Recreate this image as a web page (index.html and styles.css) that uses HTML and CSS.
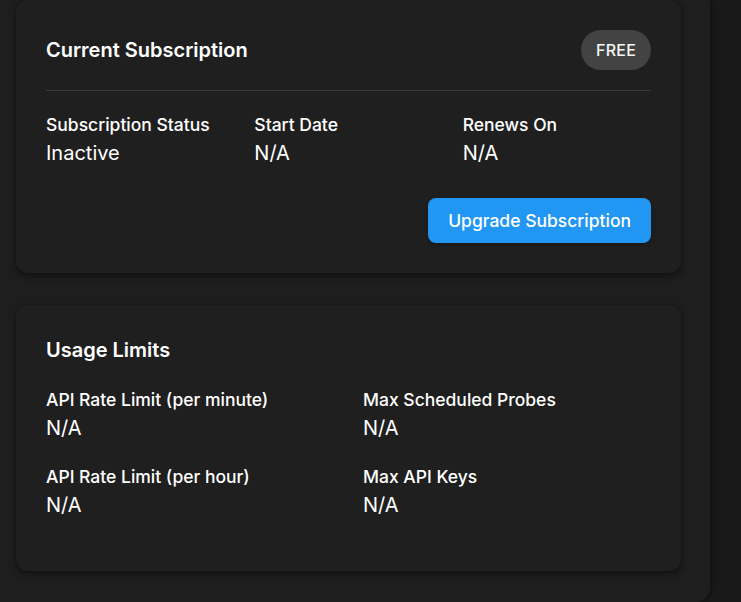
FILE: index.html
```html
<!DOCTYPE html>
<html lang="en">
<head>
<meta charset="utf-8">
<title>Subscription</title>
<link rel="stylesheet" href="styles.css">
</head>
<body>
<div class="panel">
  <section class="card">
    <div class="card-header">
      <h2 class="card-title">Current Subscription</h2>
      <span class="chip">FREE</span>
    </div>
    <hr class="divider">
    <div class="sub-grid">
      <div class="field">
        <div class="label">Subscription Status</div>
        <div class="value">Inactive</div>
      </div>
      <div class="field">
        <div class="label">Start Date</div>
        <div class="value">N/A</div>
      </div>
      <div class="field">
        <div class="label">Renews On</div>
        <div class="value">N/A</div>
      </div>
    </div>
    <div class="actions">
      <button class="btn-primary">Upgrade Subscription</button>
    </div>
  </section>

  <section class="card card-usage">
    <h2 class="card-title">Usage Limits</h2>
    <div class="usage-grid">
      <div class="field">
        <div class="label">API Rate Limit (per minute)</div>
        <div class="value">N/A</div>
      </div>
      <div class="field">
        <div class="label">Max Scheduled Probes</div>
        <div class="value">N/A</div>
      </div>
      <div class="field">
        <div class="label">API Rate Limit (per hour)</div>
        <div class="value">N/A</div>
      </div>
      <div class="field">
        <div class="label">Max API Keys</div>
        <div class="value">N/A</div>
      </div>
    </div>
  </section>
</div>
</body>
</html>
```

FILE: styles.css
```css
* { box-sizing: border-box; }

html, body {
  margin: 0;
  padding: 0;
  background: #191919;
  height: 100%;
  overflow: hidden;
}

body {
  font-family: Inter, "Noto Sans", sans-serif;
  color: #ffffff;
}

.panel {
  width: 710px;
  height: 602px;
  background: #1e1e1e;
  border-bottom-right-radius: 14px;
  box-shadow: 2px 0 4px rgba(0, 0, 0, 0.35);
  padding: 0 29px 0 16px;
  display: flex;
  flex-direction: column;
  gap: 32px;
}

.card {
  background: #1f1f1f;
  border-radius: 12px;
  padding: 30px;
  box-shadow: 0 2px 4px -1px rgba(0,0,0,0.25), 0 4px 5px 0 rgba(0,0,0,0.18), 0 1px 10px 0 rgba(0,0,0,0.15);
}

.card-header {
  display: flex;
  align-items: center;
  justify-content: space-between;
  height: 40px;
}

.card-title {
  margin: 0;
  font-size: 20px;
  font-weight: 600;
  line-height: 30px;
}

.chip {
  background: #434343;
  color: #f7f7f7;
  height: 40px;
  border-radius: 20px;
  padding: 0 15px;
  display: inline-flex;
  align-items: center;
  font-size: 16px;
  font-weight: 500;
  letter-spacing: 0.2px;
}

.divider {
  border: 0;
  border-top: 1px solid #3a3a3a;
  margin: 20px 0 22px 0;
}

.sub-grid {
  display: grid;
  grid-template-columns: repeat(3, 1fr);
  column-gap: 20px;
}

.label {
  font-size: 17.5px;
  font-weight: 500;
  line-height: 24px;
}

.value {
  margin-top: 2px;
  font-size: 20px;
  font-weight: 400;
  line-height: 28px;
}

.actions {
  display: flex;
  justify-content: flex-end;
  margin-top: 31px;
}

.btn-primary {
  font-family: inherit;
  background: #2196f3;
  color: #ffffff;
  border: 0;
  border-radius: 8px;
  height: 45px;
  padding: 0 20px;
  font-size: 17.5px;
  font-weight: 500;
  box-shadow: 0 2px 4px rgba(0,0,0,0.25);
}

.card-usage {
  padding-bottom: 29px;
}

.usage-grid {
  display: grid;
  grid-template-columns: 1fr 1fr;
  column-gap: 29px;
  row-gap: 23px;
  margin-top: 23px;
  margin-bottom: 23px;
}
```
